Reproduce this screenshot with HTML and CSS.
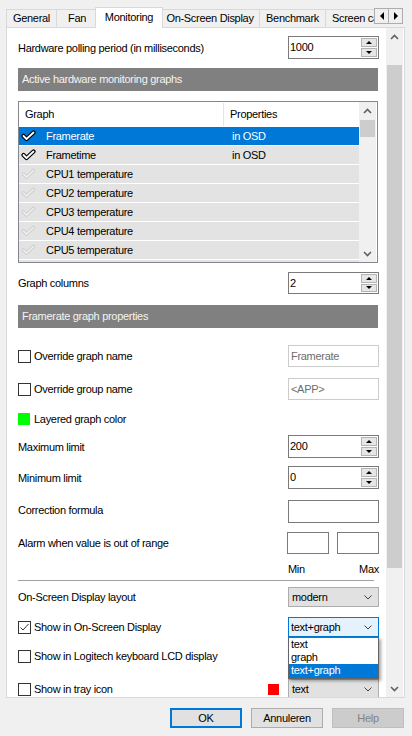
FILE: index.html
```html
<!DOCTYPE html>
<html>
<head>
<meta charset="utf-8">
<title>Monitoring</title>
<link rel="stylesheet" href="styles.css">
</head>
<body>
<div class="tabbar">
  <div class="tabs">
    <div class="tab w-general">General</div>
    <div class="tab w-fan">Fan</div>
    <div class="tab active w-mon">Monitoring</div>
    <div class="tab w-osd">On-Screen Display</div>
    <div class="tab w-bench">Benchmark</div>
    <div class="tab w-screen">Screen capture</div>
  </div>
  <div class="tab-arrows">
    <div class="tarr"><span class="tri-left"></span></div>
    <div class="tarr"><span class="tri-right"></span></div>
  </div>
</div>

<div class="panel">
  <div class="content">
    <div class="row r-poll">
      <span class="lbl">Hardware polling period (in milliseconds)</span>
      <div class="spin"><div class="spin-val">1000</div><div class="spin-btns"><div class="sbtn"><span class="tri-up"></span></div><div class="sbtn"><span class="tri-down"></span></div></div></div>
    </div>

    <div class="section s-1">Active hardware monitoring graphs</div>

    <div class="listbox">
      <div class="lb-main">
        <div class="lb-head"><div class="c-graph">Graph</div><div class="c-prop">Properties</div></div>
        <div class="lb-row sel">
          <div class="c-graph"><svg class="ck" viewBox="0 0 15 12"><path d="M2.5 6 L5.5 9 L12.5 2.5" class="ck-out"/><path d="M2.5 6 L5.5 9 L12.5 2.5" class="ck-in"/></svg><span>Framerate</span></div>
          <div class="c-prop">in OSD</div>
        </div>
        <div class="lb-row">
          <div class="c-graph"><svg class="ck" viewBox="0 0 15 12"><path d="M2.5 6 L5.5 9 L12.5 2.5" class="ck-out"/><path d="M2.5 6 L5.5 9 L12.5 2.5" class="ck-in"/></svg><span>Frametime</span></div>
          <div class="c-prop">in OSD</div>
        </div>
        <div class="lb-row">
          <div class="c-graph"><svg class="ck off" viewBox="0 0 15 12"><path d="M2.5 6 L5.5 9 L12.5 2.5" class="ck-out"/><path d="M2.5 6 L5.5 9 L12.5 2.5" class="ck-in"/></svg><span>CPU1 temperature</span></div>
          <div class="c-prop"></div>
        </div>
        <div class="lb-row">
          <div class="c-graph"><svg class="ck off" viewBox="0 0 15 12"><path d="M2.5 6 L5.5 9 L12.5 2.5" class="ck-out"/><path d="M2.5 6 L5.5 9 L12.5 2.5" class="ck-in"/></svg><span>CPU2 temperature</span></div>
          <div class="c-prop"></div>
        </div>
        <div class="lb-row">
          <div class="c-graph"><svg class="ck off" viewBox="0 0 15 12"><path d="M2.5 6 L5.5 9 L12.5 2.5" class="ck-out"/><path d="M2.5 6 L5.5 9 L12.5 2.5" class="ck-in"/></svg><span>CPU3 temperature</span></div>
          <div class="c-prop"></div>
        </div>
        <div class="lb-row">
          <div class="c-graph"><svg class="ck off" viewBox="0 0 15 12"><path d="M2.5 6 L5.5 9 L12.5 2.5" class="ck-out"/><path d="M2.5 6 L5.5 9 L12.5 2.5" class="ck-in"/></svg><span>CPU4 temperature</span></div>
          <div class="c-prop"></div>
        </div>
        <div class="lb-row">
          <div class="c-graph"><svg class="ck off" viewBox="0 0 15 12"><path d="M2.5 6 L5.5 9 L12.5 2.5" class="ck-out"/><path d="M2.5 6 L5.5 9 L12.5 2.5" class="ck-in"/></svg><span>CPU5 temperature</span></div>
          <div class="c-prop"></div>
        </div>
        <div class="lb-row">
          <div class="c-graph"><span></span></div>
          <div class="c-prop"></div>
        </div>
      </div>
      <div class="lb-scroll">
        <div class="lbs-btn"><svg class="chev" viewBox="0 0 9 6"><path d="M1 5 L4.5 1.5 L8 5"/></svg></div>
        <div class="lbs-track"><div class="lbs-thumb"></div></div>
        <div class="lbs-btn"><svg class="chev" viewBox="0 0 9 6"><path d="M1 1 L4.5 4.5 L8 1"/></svg></div>
      </div>
    </div>

    <div class="row r-cols">
      <span class="lbl">Graph columns</span>
      <div class="spin h22"><div class="spin-val">2</div><div class="spin-btns"><div class="sbtn"><span class="tri-up"></span></div><div class="sbtn"><span class="tri-down"></span></div></div></div>
    </div>

    <div class="section s-2">Framerate graph properties</div>

    <div class="row r-ovg">
      <div class="chkline"><span class="chk"></span><span class="lbl">Override graph name</span></div>
      <div class="tbox disabled">Framerate</div>
    </div>
    <div class="row r-ovgr">
      <div class="chkline"><span class="chk"></span><span class="lbl">Override group name</span></div>
      <div class="tbox disabled">&lt;APP&gt;</div>
    </div>
    <div class="row r-layer">
      <div class="chkline"><span class="swatch green"></span><span class="lbl">Layered graph color</span></div>
    </div>

    <div class="row r-max">
      <span class="lbl">Maximum limit</span>
      <div class="spin"><div class="spin-val">200</div><div class="spin-btns"><div class="sbtn"><span class="tri-up"></span></div><div class="sbtn"><span class="tri-down"></span></div></div></div>
    </div>
    <div class="row r-min">
      <span class="lbl">Minimum limit</span>
      <div class="spin"><div class="spin-val">0</div><div class="spin-btns"><div class="sbtn"><span class="tri-up"></span></div><div class="sbtn"><span class="tri-down"></span></div></div></div>
    </div>
    <div class="row r-corr">
      <span class="lbl lift">Correction formula</span>
      <div class="tbox"></div>
    </div>
    <div class="row r-alarm">
      <span class="lbl">Alarm when value is out of range</span>
      <div class="pair"><div class="tbox small"></div><div class="tbox small"></div></div>
    </div>
    <div class="row r-minmax">
      <span></span>
      <div class="minmax"><span>Min</span><span>Max</span></div>
    </div>
    <div class="sep"></div>

    <div class="row r-layout">
      <span class="lbl">On-Screen Display layout</span>
      <div class="combo"><span>modern</span><svg class="dchev" viewBox="0 0 8 5"><path d="M0.5 0.5 L4 4 L7.5 0.5"/></svg></div>
    </div>
    <div class="row r-osd">
      <div class="chkline"><span class="chk on"><svg viewBox="0 0 11 11"><path d="M1.5 5.5 L4 8 L9.5 2"/></svg></span><span class="lbl">Show in On-Screen Display</span></div>
      <div class="combo focus"><span>text+graph</span><svg class="dchev" viewBox="0 0 8 5"><path d="M0.5 0.5 L4 4 L7.5 0.5"/></svg>
        <div class="popup">
          <div class="pitem">text</div>
          <div class="pitem">graph</div>
          <div class="pitem psel">text+graph</div>
        </div>
      </div>
    </div>
    <div class="row r-lcd">
      <div class="chkline"><span class="chk"></span><span class="lbl">Show in Logitech keyboard LCD display</span></div>
    </div>
    <div class="row r-tray">
      <div class="chkline"><span class="chk"></span><span class="lbl">Show in tray icon</span></div>
      <div class="trayright"><span class="swatch red"></span><div class="combo"><span>text</span><svg class="dchev" viewBox="0 0 8 5"><path d="M0.5 0.5 L4 4 L7.5 0.5"/></svg></div></div>
    </div>
  </div>
  <div class="vscroll">
    <div class="vs-btn"><svg class="chev" viewBox="0 0 9 6"><path d="M1 5 L4.5 1.5 L8 5"/></svg></div>
    <div class="vs-track"><div class="vs-thumb"></div></div>
    <div class="vs-btn"><svg class="chev" viewBox="0 0 9 6"><path d="M1 1 L4.5 4.5 L8 1"/></svg></div>
  </div>
</div>

<div class="buttons">
  <div class="btn default">OK</div>
  <div class="btn">Annuleren</div>
  <div class="btn disabled">Help</div>
</div>
</body>
</html>
```
FILE: styles.css
```css
* { box-sizing: border-box; }
html, body { margin: 0; padding: 0; }
body {
  background: #f0f0f0;
  font-family: "Liberation Sans", Arial, sans-serif;
  font-size: 11px;
  letter-spacing: -0.3px;
  color: #000;
  width: 412px;
  height: 736px;
  overflow: hidden;
  position: relative;
}

/* ---------- tabs ---------- */
.tabbar { height: 27px; position: relative; padding-left: 6px; }
.tabs {
  display: flex;
  align-items: flex-end;
  width: 368px;
  height: 28px;
  overflow: hidden;
  position: relative;
  z-index: 2;
}
.tab {
  flex: none;
  height: 18px;
  margin-bottom: 1px;
  border: 1px solid #d9d9d9;
  border-bottom: none;
  border-right: none;
  background: #f0f0f0;
  line-height: 16px;
  text-align: center;
  white-space: nowrap;
}
.tab.active {
  height: 21px;
  margin: 0 -2px 0 -2px;
  border-right: 1px solid #d9d9d9;
  background: #fff;
  line-height: 18px;
  position: relative;
  z-index: 3;
}
.w-general { width: 50px; }
.w-fan { width: 41px; }
.w-mon { width: 68px; }
.w-osd { width: 98px; }
.w-bench { width: 66px; }
.w-screen { width: 62px; text-align: left; padding-left: 6px; }
.tab + .tab.active + .tab { border-left: none; }
.tab-arrows {
  position: absolute;
  left: 374px;
  top: 8px;
  display: flex;
  z-index: 4;
}
.tarr {
  width: 15px;
  height: 16px;
  border: 1px solid #adadad;
  background: #f0f0f0;
  display: flex;
  align-items: center;
  justify-content: center;
}
.tarr + .tarr { border-left: none; width: 14px; }
.tri-left { width: 0; height: 0; border-top: 4px solid transparent; border-bottom: 4px solid transparent; border-right: 4px solid #000; }
.tri-right { width: 0; height: 0; border-top: 4px solid transparent; border-bottom: 4px solid transparent; border-left: 4px solid #000; }

/* ---------- panel ---------- */
.panel {
  margin-left: 6px;
  width: 399px;
  height: 671px;
  border: 1px solid #d9d9d9;
  background: #fff;
  display: flex;
  overflow: hidden;
  position: relative;
  z-index: 1;
}
.content {
  width: 379px;
  flex: none;
  padding: 0 7px 0 11px;
  display: flex;
  flex-direction: column;
  overflow: hidden;
}
.vscroll {
  width: 17px;
  flex: none;
  background: #f0f0f0;
  display: flex;
  flex-direction: column;
}
.vs-btn { height: 17px; display: flex; align-items: center; justify-content: center; }
.vs-track { flex: 1; padding-top: 20px; }
.vs-thumb { height: 503px; margin: 0 1px; background: #cdcdcd; }
.chev { width: 9px; height: 6px; }
.chev path { fill: none; stroke: #606060; stroke-width: 1.6; }

/* ---------- rows ---------- */
.row {
  display: flex;
  align-items: center;
  justify-content: space-between;
  flex: none;
  white-space: nowrap;
}
.lbl { white-space: nowrap; }
.lift { margin-top: -3px; }
.r-poll { margin-top: 8px; height: 23px; }
.s-1 { margin-top: 9px; }
.r-cols { margin-top: 9px; height: 22px; }
.s-2 { margin-top: 11px; }
.r-ovg { margin-top: 17px; height: 22px; }
.r-ovgr { margin-top: 11px; height: 22px; }
.r-layer { margin-top: 12px; height: 14px; }
.r-max { margin-top: 9px; height: 23px; }
.r-min { margin-top: 8px; height: 23px; }
.r-corr { margin-top: 11px; height: 23px; }
.r-alarm { margin-top: 9px; height: 22px; }
.r-minmax { margin-top: 8px; height: 14px; }
.r-layout { margin-top: 6px; height: 20px; }
.r-osd { margin-top: 10px; height: 20px; position: relative; z-index: 5; }
.r-lcd { margin-top: 9px; height: 20px; }
.r-tray { margin-top: 13px; height: 20px; }

.section {
  flex: none;
  height: 23px;
  width: 360px;
  background: #808080;
  color: #f4f4f4;
  padding-left: 4px;
  line-height: 23px;
}

/* spin box */
.spin {
  width: 91px;
  height: 23px;
  border: 1px solid #7a7a7a;
  background: #fff;
  display: flex;
}
.spin.h22 { height: 22px; }
.spin-val { flex: 1; padding-left: 1px; line-height: 20px; }
.spin-btns {
  width: 17px;
  display: flex;
  flex-direction: column;
  gap: 1px;
  padding: 1px 1px 1px 0;
}
.sbtn {
  flex: 1;
  border: 1px solid #b4b4b4;
  background: #e6e6e6;
  display: flex;
  align-items: center;
  justify-content: center;
}
.tri-up { width: 0; height: 0; border-left: 3px solid transparent; border-right: 3px solid transparent; border-bottom: 3px solid #000; }
.tri-down { width: 0; height: 0; border-left: 3px solid transparent; border-right: 3px solid transparent; border-top: 3px solid #000; }

/* list box */
.listbox {
  flex: none;
  margin-top: 10px;
  width: 360px;
  height: 162px;
  border: 1px solid #828790;
  display: flex;
  overflow: hidden;
}
.lb-main { width: 340px; flex: none; overflow: hidden; }
.lb-head { height: 25px; display: flex; align-items: stretch; background: #fff; }
.lb-head .c-graph { width: 205px; padding-left: 6px; border-right: 1px solid #e5e5e5; margin: 1px 0 1px; line-height: 23px; }
.lb-head .c-prop { padding-left: 6px; line-height: 25px; }
.lb-row {
  height: 18px;
  margin-bottom: 1px;
  background: #e3e3e3;
  display: flex;
  align-items: center;
}
.lb-row.sel { background: #0078d7; color: #fff; }
.lb-row .c-graph { width: 204px; display: flex; align-items: center; padding-left: 2px; }
.lb-row .c-graph span { margin-left: 10px; }
.lb-row .c-prop { padding-left: 9px; }
.ck { width: 15px; height: 12px; flex: none; }
.ck path { fill: none; stroke-linecap: round; stroke-linejoin: round; }
.ck .ck-out { stroke: #000; stroke-width: 4.2; }
.ck .ck-in { stroke: #fff; stroke-width: 1.8; }
.ck.off .ck-out { stroke: #cfcfcf; stroke-width: 3.6; }
.ck.off .ck-in { stroke: #f0f0f0; stroke-width: 1.6; }
.lb-scroll {
  width: 17px;
  flex: none;
  background: #f0f0f0;
  display: flex;
  flex-direction: column;
}
.lbs-btn { height: 17px; display: flex; align-items: center; justify-content: center; }
.lbs-track { flex: 1; padding-top: 1px; }
.lbs-thumb { height: 17px; margin: 0 1px; background: #cdcdcd; }

/* checkboxes */
.chkline { display: flex; align-items: center; }
.chk {
  width: 13px;
  height: 13px;
  border: 1px solid #333;
  background: #fff;
  margin-right: 3px;
  flex: none;
  display: flex;
}
.chk svg { width: 11px; height: 11px; }
.chk svg path { fill: none; stroke: #333; stroke-width: 1; }
.swatch { width: 12px; height: 12px; flex: none; }
.swatch.green { background: #00ff00; margin-right: 4px; }
.swatch.red { background: #ff0000; width: 11px; height: 11px; margin-right: 9px; }

/* text boxes */
.tbox {
  width: 91px;
  height: 100%;
  border: 1px solid #7a7a7a;
  background: #fff;
  padding-left: 2px;
  line-height: 20px;
}
.tbox.disabled { border-color: #cccccc; color: #6d6d6d; }
.pair { display: flex; gap: 8px; height: 100%; }
.tbox.small { width: 42px; }
.minmax { width: 91px; display: flex; justify-content: space-between; }

.sep { flex: none; margin-top: 4px; height: 1px; width: 356px; background: #a0a0a0; }

/* combos */
.combo {
  width: 91px;
  height: 20px;
  border: 1px solid #adadad;
  background: #e1e1e1;
  display: flex;
  align-items: center;
  justify-content: space-between;
  padding: 0 6px 0 3px;
  position: relative;
}
.combo.focus { background: #e5f1fb; border-color: #0078d7; padding-left: 2px; }
.dchev { width: 8px; height: 5px; }
.dchev path { fill: none; stroke: #404040; stroke-width: 1; }
.popup {
  position: absolute;
  top: 19px;
  left: -1px;
  width: 91px;
  height: 42px;
  border: 1px solid #646464;
  background: #fff;
  box-shadow: 2px 2px 3px rgba(0, 0, 0, 0.35);
  padding: 0;
}
.pitem { height: 13px; line-height: 13px; padding-left: 2px; }
.pitem.psel { height: 14px; background: #0078d7; color: #fff; }
.trayright { display: flex; align-items: center; height: 100%; }
.trayright .combo { align-self: flex-start; }

/* buttons */
.buttons {
  display: flex;
  gap: 9px;
  padding-left: 170px;
  margin-top: 10px;
}
.btn {
  width: 72px;
  height: 20px;
  border: 1px solid #adadad;
  background: #e1e1e1;
  text-align: center;
  line-height: 18px;
}
.btn.default { border: 2px solid #0078d7; line-height: 16px; }
.btn.disabled { background: #cccccc; border-color: #bfbfbf; color: #838383; }
```
